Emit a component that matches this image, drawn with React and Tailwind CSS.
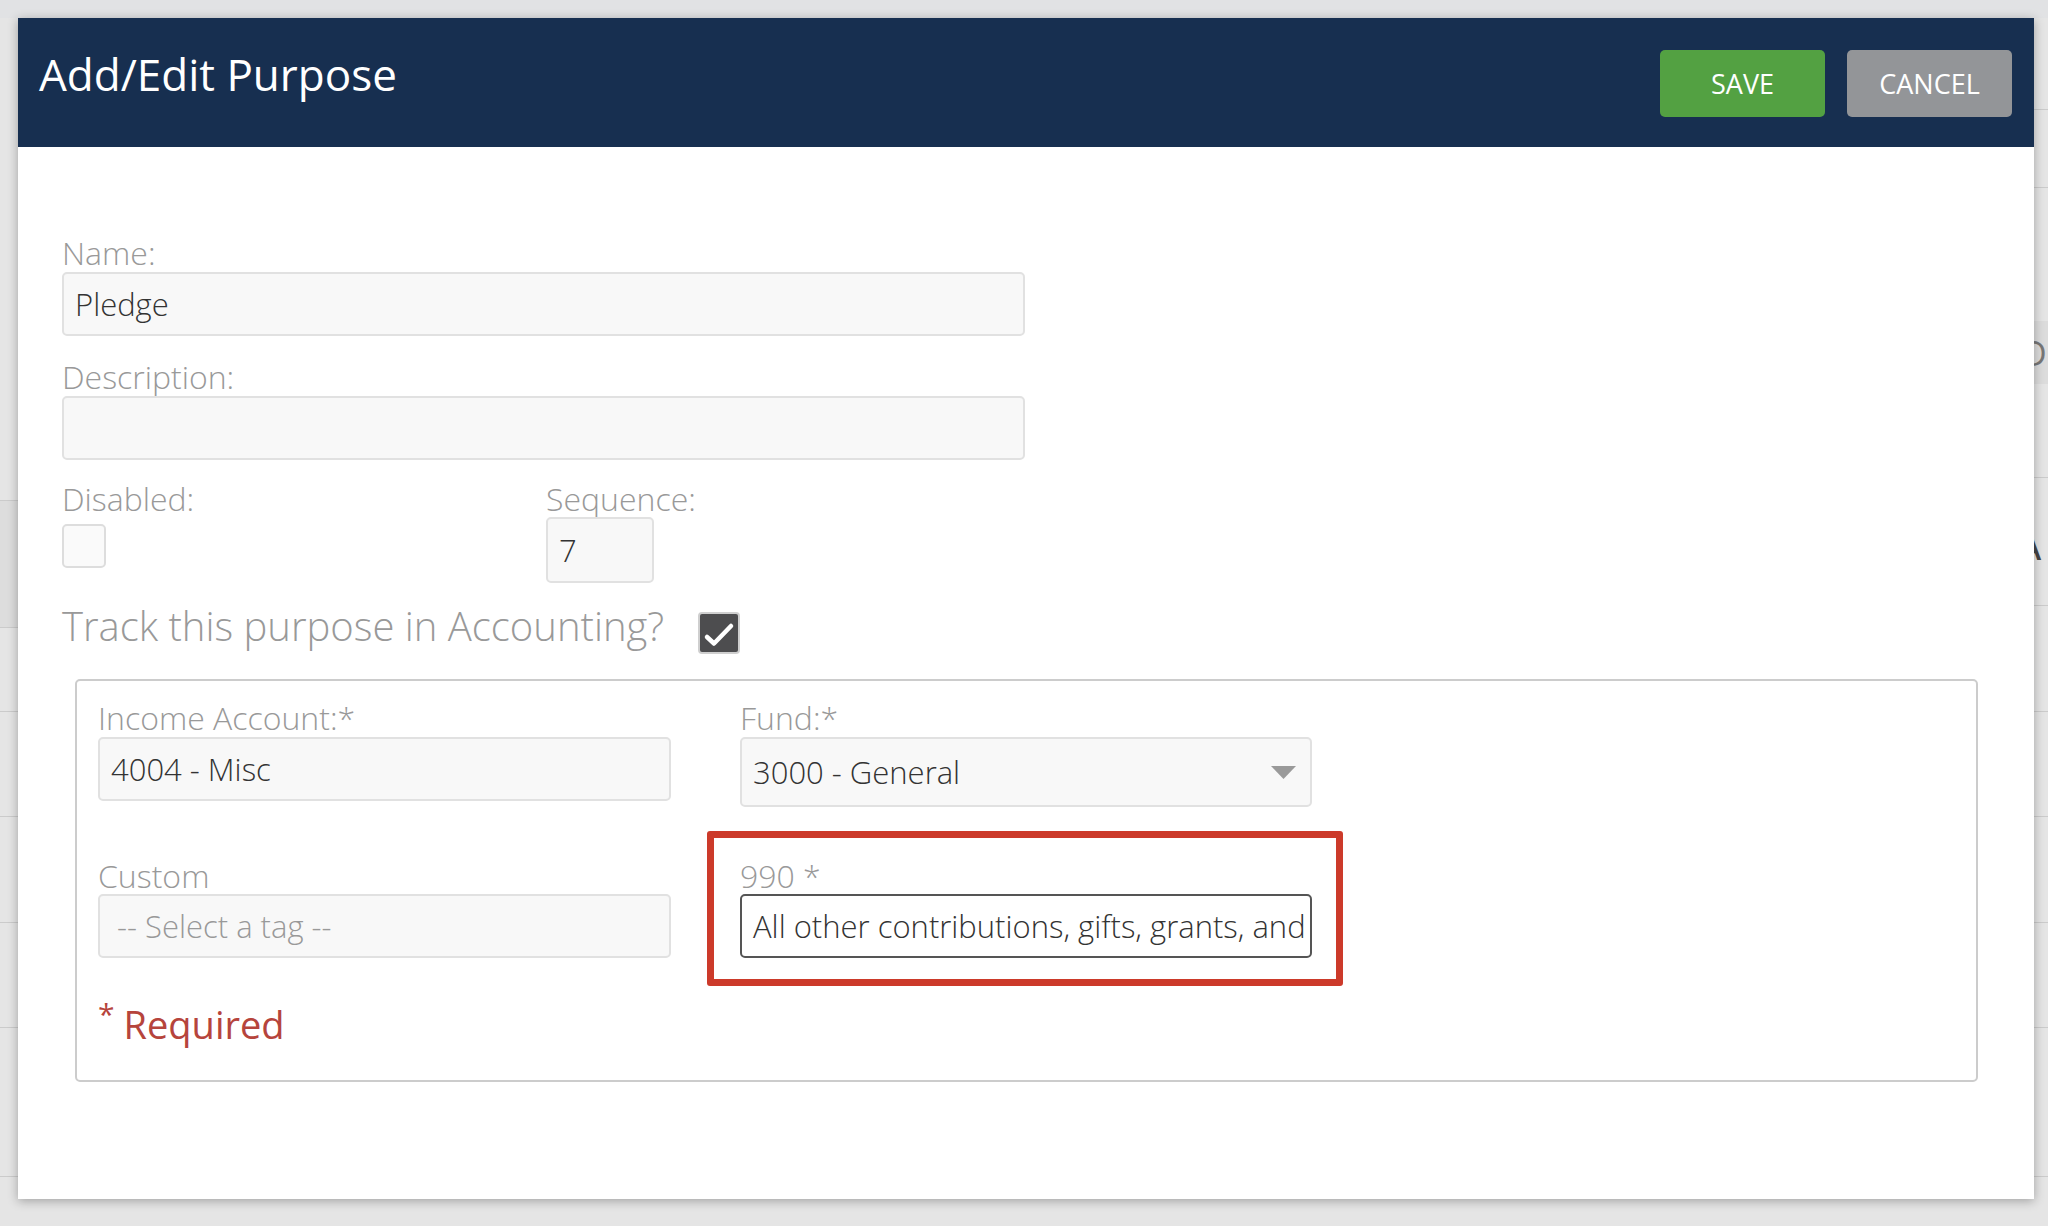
export default function App() {
  const label = "block text-[32px] font-light leading-none text-[#999999]";
  const input =
    "flex items-center h-[64px] rounded-[5px] border-2 border-[#e1e1e1] bg-[#f8f8f8] px-[11px] text-[31px] font-light leading-none text-[#333333]";
  const rowL = "border-b border-[#cbcbcb]";
  return (
    <div className="relative w-[2048px] h-[1226px] overflow-hidden bg-[#e5e5e5] font-['Open_Sans',sans-serif]">
      {/* page behind the dialog */}
      <div className="flex h-full">
        <div className="w-[18px] flex flex-col">
          <div className="h-[18px] shrink-0 bg-[#e1e2e4]" />
          <div className={`h-[483px] shrink-0 ${rowL}`} />
          <div className={`h-[127px] shrink-0 bg-[#dddddd] ${rowL}`} />
          <div className={`h-[84px] shrink-0 ${rowL}`} />
          <div className={`h-[105px] shrink-0 ${rowL}`} />
          <div className={`h-[106px] shrink-0 ${rowL}`} />
          <div className={`h-[105px] shrink-0 ${rowL}`} />
          <div className={`h-[149px] shrink-0 ${rowL}`} />
        </div>
        <div className="flex-1 flex flex-col">
          <div className="h-[18px] bg-[#e1e2e4]" />
        </div>
        <div className="w-[14px] flex flex-col overflow-hidden">
          <div className="h-[18px] shrink-0 bg-[#e1e2e4]" />
          <div className={`h-[92px] shrink-0 ${rowL}`} />
          <div className={`h-[78px] shrink-0 ${rowL}`} />
          <div className="h-[133px] shrink-0" />
          <div className="h-[63px] shrink-0 bg-[#dcdcdc] flex items-center">
            <span className="-ml-[12px] text-[34px] leading-none text-[#777777]">D</span>
          </div>
          <div className={`h-[94px] shrink-0 ${rowL}`} />
          <div className={`h-[128px] shrink-0 flex items-center pt-[12px] ${rowL}`}>
            <span className="-ml-[14px] text-[32px] font-semibold leading-none text-[#444444]">A</span>
          </div>
          <div className={`h-[106px] shrink-0 ${rowL}`} />
          <div className={`h-[105px] shrink-0 ${rowL}`} />
          <div className={`h-[106px] shrink-0 ${rowL}`} />
          <div className={`h-[105px] shrink-0 ${rowL}`} />
          <div className={`h-[149px] shrink-0 ${rowL}`} />
        </div>
      </div>

      {/* dialog */}
      <div className="absolute left-[18px] top-[18px] w-[2016px] h-[1181px] bg-white shadow-[0_2px_10px_rgba(0,0,0,0.3)] flex flex-col">
        <div className="h-[129px] shrink-0 bg-[#172f50] flex items-start justify-between pl-[21px] pr-[22px]">
          <h1 className="mt-[34px] text-[44px] leading-none text-white">Add/Edit Purpose</h1>
          <div className="flex gap-[22px] mt-[32px]">
            <button className="flex items-center justify-center w-[165px] h-[67px] rounded-[5px] bg-[#53a142] text-white text-[27px] leading-none">
              SAVE
            </button>
            <button className="flex items-center justify-center w-[165px] h-[67px] rounded-[5px] bg-[#939598] text-white text-[27px] leading-none">
              CANCEL
            </button>
          </div>
        </div>

        <div className="flex flex-col pl-[44px] pr-[56px] pt-[90px]">
          <label className={label}>Name:</label>
          <div className={`${input} mt-[3px] w-[963px]`}>Pledge</div>

          <label className={`${label} mt-[25px]`}>Description:</label>
          <div className={`${input} mt-[3px] w-[963px]`}></div>

          <div className="flex mt-[23px]">
            <div className="w-[484px] flex flex-col">
              <label className={label}>Disabled:</label>
              <div className="mt-[9px] w-[44px] h-[44px] rounded-[5px] border-2 border-[#dddddd] bg-[#fafafa]" />
            </div>
            <div className="flex flex-col">
              <label className={label}>Sequence:</label>
              <div className={`${input} mt-[2px] w-[108px] h-[66px]`}>7</div>
            </div>
          </div>

          <div className="flex items-start mt-[23px]">
            <span className="text-[40px] font-light leading-none text-[#999999]">Track this purpose in Accounting?</span>
            <div className="ml-[34px] mt-[6px] w-[42px] h-[42px] rounded-[4px] border-2 border-[#cfcfcf] bg-[#4d4d4f] flex items-center justify-center">
              <svg width="38" height="38" viewBox="0 0 38 38">
                <path d="M7 23 L14 29.5 L31 12" fill="none" stroke="white" strokeWidth="4.5" strokeLinecap="round" strokeLinejoin="round" />
              </svg>
            </div>
          </div>

          <div className="mt-[25px] ml-[13px] rounded-[5px] border-2 border-[#cccccc] pt-[21px] pl-[21px] pb-[37px]">
            <div className="grid grid-cols-[573px_572px] gap-x-[69px] gap-y-[53px] items-start">
              <div className="flex flex-col">
                <label className={label}>Income Account:*</label>
                <div className={`${input} mt-[3px]`}>4004 - Misc</div>
              </div>
              <div className="flex flex-col">
                <label className={label}>Fund:*</label>
                <div className={`${input} mt-[3px] h-[70px] justify-between pr-[14px]`}>
                  <span>3000 - General</span>
                  <svg width="25" height="13" viewBox="0 0 25 13">
                    <polygon points="0,0 25,0 12.5,13" fill="#9a9a9a" />
                  </svg>
                </div>
              </div>
              <div className="flex flex-col">
                <label className={label}>Custom</label>
                <div className={`${input} mt-[2px] pl-[17px] text-[24px] text-[#999999]`}>-- Select a tag --</div>
              </div>
              <div className="relative flex flex-col">
                <label className={label}>990 *</label>
                <div className="mt-[2px] flex items-center h-[64px] rounded-[5px] border-2 border-[#555555] bg-white px-[11px] text-[31px] font-light leading-none text-[#333333] whitespace-nowrap overflow-hidden">
                  All other contributions, gifts, grants, and
                </div>
                <div className="absolute -left-[33px] -top-[29px] w-[636px] h-[155px] border-[7px] border-[#cc3a2a] rounded-[3px] pointer-events-none" />
              </div>
            </div>

            <div className="mt-[47px] flex items-start text-[#b6443c]">
              <span className="-mt-[6px] text-[30px] leading-none">*</span>
              <span className="ml-[9px] text-[38px] leading-none">Required</span>
            </div>
          </div>
        </div>
      </div>
    </div>
  );
}
